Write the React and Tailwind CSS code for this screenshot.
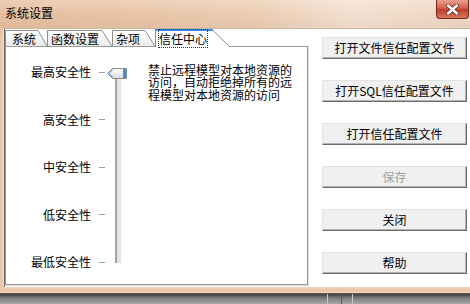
const levels = ["最高安全性", "高安全性", "中安全性", "低安全性", "最低安全性"];

const tabs = [
  { label: "系统", width: 42, slant: 9, pad: "pl-[7px]" },
  { label: "函数设置", width: 65, slant: 10, pad: "pl-[4px]" },
  { label: "杂项", width: 43, slant: 10, pad: "pl-[4px]" },
];

const buttons = [
  { label: "打开文件信任配置文件" },
  { label: "打开SQL信任配置文件" },
  { label: "打开信任配置文件" },
  { label: "保存", disabled: true },
  { label: "关闭" },
  { label: "帮助" },
];

export default function App() {
  return (
    <div className="flex h-[304px] w-[470px] flex-col overflow-hidden bg-[#eccbb0] font-['Noto_Sans_CJK_SC','Noto_Sans_CJK_JP',sans-serif] text-[12px] leading-[12px] text-black">
      <TitleBar />

      <div className="flex h-[259px]">
        <div className="w-[4px] bg-[linear-gradient(to_right,#e8c0a0,#f2d8c4)]" />
        <div className="flex flex-1 border-l border-t border-l-[#6f6a66] border-t-[#c9b6a4] bg-white">
          <div className="flex w-[303px] flex-col pt-[1px]">
            <div className="flex h-[16px] items-end">
              {tabs.map((tab) => (
                <Tab key={tab.label} {...tab} />
              ))}
              <ActiveTab />
            </div>
            <TrustPanel />
          </div>

          <div className="ml-[14px] flex flex-col gap-[21px] pt-[8px]">
            {buttons.map((button) => (
              <ClassicButton key={button.label} {...button} />
            ))}
          </div>
        </div>
      </div>

      <div className="h-[7px] border-b border-[#5b5550] bg-[linear-gradient(to_bottom,#f0d4bd,#e8c3a4_60%,#f3dcc9)]" />
      <div className="relative h-[10px] bg-[linear-gradient(to_bottom,#3d3b3a,#7d7d7d_40%,#a9a9a9)]">
        <div className="absolute left-[327px] top-0 h-full w-px bg-[#c8c8c8]" />
        <div className="absolute left-[341px] top-0 h-full w-px bg-[#5a5a5a]" />
        <div className="absolute left-[352px] top-0 h-full w-px bg-[#c8c8c8]" />
      </div>
    </div>
  );
}

function TitleBar() {
  return (
    <div className="relative h-[28px] bg-[linear-gradient(to_right,#e6be9f,#e9c4a6_30%,#eccdb3_55%,#f3dfcf_75%,#efd6c2)]">
      <div className="absolute inset-0 bg-[linear-gradient(to_bottom,rgba(255,255,255,0.25),rgba(255,255,255,0)_50%,rgba(0,0,0,0.03))]" />
      <span className="relative block pl-[5px] pt-[7px] text-black">系统设置</span>
      <div className="absolute right-[1px] top-0 flex h-[19px] w-[33px] items-center justify-center rounded-b-[4px] border border-t-0 border-[#6e2a1e] bg-[linear-gradient(to_bottom,#e8a090,#d2604a_45%,#bd3f28_55%,#d9775f)]">
        <svg width="13" height="11" viewBox="0 0 13 11">
          <path d="M2 1.5 L11 9.5 M11 1.5 L2 9.5" stroke="#5a2a20" strokeWidth="4" strokeLinecap="round" />
          <path d="M2 1.5 L11 9.5 M11 1.5 L2 9.5" stroke="#ffffff" strokeWidth="2.4" strokeLinecap="round" />
        </svg>
      </div>
    </div>
  );
}

function Tab({ label, width, slant, pad }) {
  return (
    <div className="relative h-[16px] shrink-0" style={{ width }}>
      <svg className="absolute inset-0" width={width} height="16">
        <defs>
          <linearGradient id="tabFill" x1="0" y1="0" x2="0" y2="1">
            <stop offset="0" stopColor="#ffffff" />
            <stop offset="1" stopColor="#ebebeb" />
          </linearGradient>
        </defs>
        <path
          d={`M0.5 16 V0.5 H${width - slant} L${width} 16 Z`}
          fill="url(#tabFill)"
        />
        <path
          d={`M0.5 16 V0.5 H${width - slant} L${width} 16`}
          fill="none"
          stroke="#8e8e8e"
        />
      </svg>
      <span className={`relative block pt-[3px] ${pad}`}>{label}</span>
    </div>
  );
}

function ActiveTab() {
  return (
    <div className="relative z-10 -mb-px h-[18px] w-[75px] shrink-0">
      <svg className="absolute inset-0" width="75" height="18">
        <path d="M0.5 18 V0.5 H57 L75 18 Z" fill="#ffffff" />
        <path d="M0.5 18 V0.5 H57 L75 18" fill="none" stroke="#8e8e8e" />
        <path d="M0 0 H56 Q58 0 58.5 2 H0 Z" fill="#3b8de6" />
      </svg>
      <span className="relative block pl-[4px] pt-[4px]">
        <span className="outline-1 outline-dotted outline-[#333]">信任中心</span>
      </span>
    </div>
  );
}

function TrustPanel() {
  return (
    <div className="flex h-[239px] border border-[#9a9a9a] shadow-[1px_1px_0_#dcdcdc]">
      <div className="flex w-[99px] flex-col gap-[35.5px] pt-[19px]">
        {levels.map((level) => (
          <div key={level} className="flex h-[12px] items-center">
            <span className="w-[85px] text-right">{level}</span>
            <span className="ml-[8px] h-px w-[6px] bg-[#a0a0a0]" />
          </div>
        ))}
      </div>

      <div className="relative ml-[10px] mt-[31px] h-[185px] w-[6px] border-l-2 border-[#a3a3a3] bg-[#e4e4e4]">
        <svg className="absolute -left-[10px] -top-[10px]" width="20" height="11" viewBox="0 0 20 11">
          <defs>
            <linearGradient id="thumbFill" x1="0" y1="0" x2="0" y2="1">
              <stop offset="0" stopColor="#ffffff" />
              <stop offset="1" stopColor="#dcdcdc" />
            </linearGradient>
          </defs>
          <path d="M0.5 5.5 L5.5 0.5 H19.5 V10.5 H5.5 Z" fill="url(#thumbFill)" stroke="#8a8a8a" />
          <path d="M2 5.5 L6 1.5" stroke="#3b8de6" strokeWidth="1" />
          <path d="M2 5.5 L6 9.5" stroke="#3b8de6" strokeWidth="1" />
          <rect x="16" y="1" width="3" height="9" fill="#3b8de6" />
        </svg>
      </div>

      <div className="ml-[27px] mt-[17px] leading-[12.3px]">
        <span className="block">禁止远程模型对本地资源的</span>
        <span className="block">访问，自动拒绝掉所有的远</span>
        <span className="block">程模型对本地资源的访问</span>
      </div>
    </div>
  );
}

function ClassicButton({ label, disabled }) {
  return (
    <button
      type="button"
      className={`flex h-[22px] w-[145px] items-center justify-center border border-b-[#6a6a6a] border-l-[#e2e2e2] border-r-[#6a6a6a] border-t-[#e2e2e2] bg-[#f0f0f0] shadow-[inset_-1px_-1px_0_#b4b4b4] ${
        disabled ? "text-[#a0a0a0]" : "text-black"
      }`}
    >
      {label}
    </button>
  );
}
